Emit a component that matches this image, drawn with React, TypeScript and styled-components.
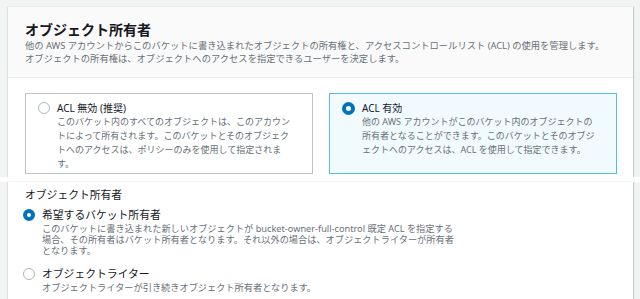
import React from 'react'
import styled, { createGlobalStyle } from 'styled-components'

const GlobalStyle = createGlobalStyle`
  html, body { margin: 0; padding: 0; background: #f2f3f3; }
  body {
    font-family: "Noto Sans", "Noto Sans CJK JP", sans-serif;
    color: #16191f;
    width: 640px;
    height: 299px;
    overflow: hidden;
  }
`

const Page = styled.div`
  display: flex;
  flex-direction: column;
  width: 640px;
  height: 299px;
  background: #f2f3f3;
`

const Shell = styled.div<{ top?: boolean }>`
  display: flex;
  padding: ${({ top }) => (top ? '7px 7px 0 8px' : '0 7px 0 8px')};
  flex: ${({ top }) => (top ? '0 0 auto' : '1 1 auto')};
`

const Seam = styled.div`
  height: 5px;
  background: #ffffff;
`

const Panel = styled.section`
  flex: 1;
  background: #ffffff;
  box-shadow: 1px 0 1px rgba(0, 28, 36, 0.18), -1px 0 1px rgba(0, 28, 36, 0.08);
  display: flex;
  flex-direction: column;
`

const Header = styled.header`
  background: #fafafa;
  border-bottom: 1px solid #eaeded;
  padding: 13px 16px 12px 17px;
`

const Title = styled.h2`
  margin: 0;
  font-size: 14px;
  line-height: 20px;
  font-weight: 700;
  color: #16191f;
`

const Description = styled.p`
  margin: 0;
  font-size: 9.3px;
  line-height: 12.7px;
  color: #687078;
  white-space: nowrap;
`

const Body = styled.div`
  padding: 15px 16px 3px 17px;
`

const Tiles = styled.div`
  display: grid;
  grid-template-columns: 288px 288px;
  gap: 16px;
`

const Tile = styled.label<{ selected?: boolean }>`
  display: flex;
  gap: 7px;
  height: 81px;
  box-sizing: border-box;
  padding: 7px 12px 3px 12px;
  border: 1px solid ${({ selected }) => (selected ? '#55bde0' : '#bcc4c6')};
  background: ${({ selected }) => (selected ? '#f1faff' : '#ffffff')};
`

const Radio = styled.span<{ checked?: boolean; size: number }>`
  flex: 0 0 auto;
  box-sizing: border-box;
  width: ${({ size }) => size}px;
  height: ${({ size }) => size}px;
  border-radius: 50%;
  background: #ffffff;
  border: ${({ checked, size }) =>
    checked ? `${Math.round(size * 0.3)}px solid #0073bb` : '1.5px solid #aab7b8'};
`

const RadioSlot = styled.span<{ h: number }>`
  display: flex;
  align-items: center;
  height: ${({ h }) => h}px;
`

const TileText = styled.div`
  display: flex;
  flex-direction: column;
`

const TileLabel = styled.span`
  font-size: 10px;
  line-height: 14px;
  color: #16191f;
`

const TileDesc = styled.span`
  font-size: 9px;
  line-height: 14px;
  color: #687078;
  white-space: nowrap;
`

const Lower = styled.div`
  padding: 5px 16px 0 17px;
  display: flex;
  flex-direction: column;
`

const GroupLabel = styled.div`
  font-size: 10.8px;
  line-height: 16px;
  color: #16191f;
  margin-bottom: 4px;
`

const Option = styled.div`
  display: flex;
  gap: 7px;
  margin-left: -2px;
  & + & {
    margin-top: 10px;
  }
`

const OptionLabel = styled.span`
  font-size: 10.8px;
  line-height: 16px;
  color: #16191f;
`

const OptionDesc = styled.span`
  font-size: 9.2px;
  line-height: 11px;
  color: #687078;
  white-space: nowrap;
`

export default function App() {
  return (
    <Page>
      <GlobalStyle />
      <Shell top>
        <Panel>
          <Header>
            <Title>オブジェクト所有者</Title>
            <Description>
              他の AWS アカウントからこのバケットに書き込まれたオブジェクトの所有権と、アクセスコントロールリスト (ACL) の使用を管理します。
              <br />
              オブジェクトの所有権は、オブジェクトへのアクセスを指定できるユーザーを決定します。
            </Description>
          </Header>
          <Body>
            <Tiles>
              <Tile>
                <RadioSlot h={14}>
                  <Radio size={12} />
                </RadioSlot>
                <TileText>
                  <TileLabel>ACL 無効 (推奨)</TileLabel>
                  <TileDesc>
                    このバケット内のすべてのオブジェクトは、このアカウン
                    <br />
                    トによって所有されます。このバケットとそのオブジェク
                    <br />
                    トへのアクセスは、ポリシーのみを使用して指定されま
                    <br />
                    す。
                  </TileDesc>
                </TileText>
              </Tile>
              <Tile selected>
                <RadioSlot h={14}>
                  <Radio size={13} checked />
                </RadioSlot>
                <TileText>
                  <TileLabel>ACL 有効</TileLabel>
                  <TileDesc>
                    他の AWS アカウントがこのバケット内のオブジェクトの
                    <br />
                    所有者となることができます。このバケットとそのオブジ
                    <br />
                    ェクトへのアクセスは、ACL を使用して指定できます。
                  </TileDesc>
                </TileText>
              </Tile>
            </Tiles>
          </Body>
        </Panel>
      </Shell>
      <Seam />
      <Shell>
        <Panel>
          <Lower>
            <GroupLabel>オブジェクト所有者</GroupLabel>
            <Option>
              <RadioSlot h={16}>
                <Radio size={12} checked />
              </RadioSlot>
              <TileText>
                <OptionLabel>希望するバケット所有者</OptionLabel>
                <OptionDesc>
                  このバケットに書き込まれた新しいオブジェクトが bucket-owner-full-control 既定 ACL を指定する
                  <br />
                  場合、その所有者はバケット所有者となります。それ以外の場合は、オブジェクトライターが所有者
                  <br />
                  となります。
                </OptionDesc>
              </TileText>
            </Option>
            <Option>
              <RadioSlot h={16}>
                <Radio size={12} />
              </RadioSlot>
              <TileText>
                <OptionLabel>オブジェクトライター</OptionLabel>
                <OptionDesc>オブジェクトライターが引き続きオブジェクト所有者となります。</OptionDesc>
              </TileText>
            </Option>
          </Lower>
        </Panel>
      </Shell>
    </Page>
  )
}
